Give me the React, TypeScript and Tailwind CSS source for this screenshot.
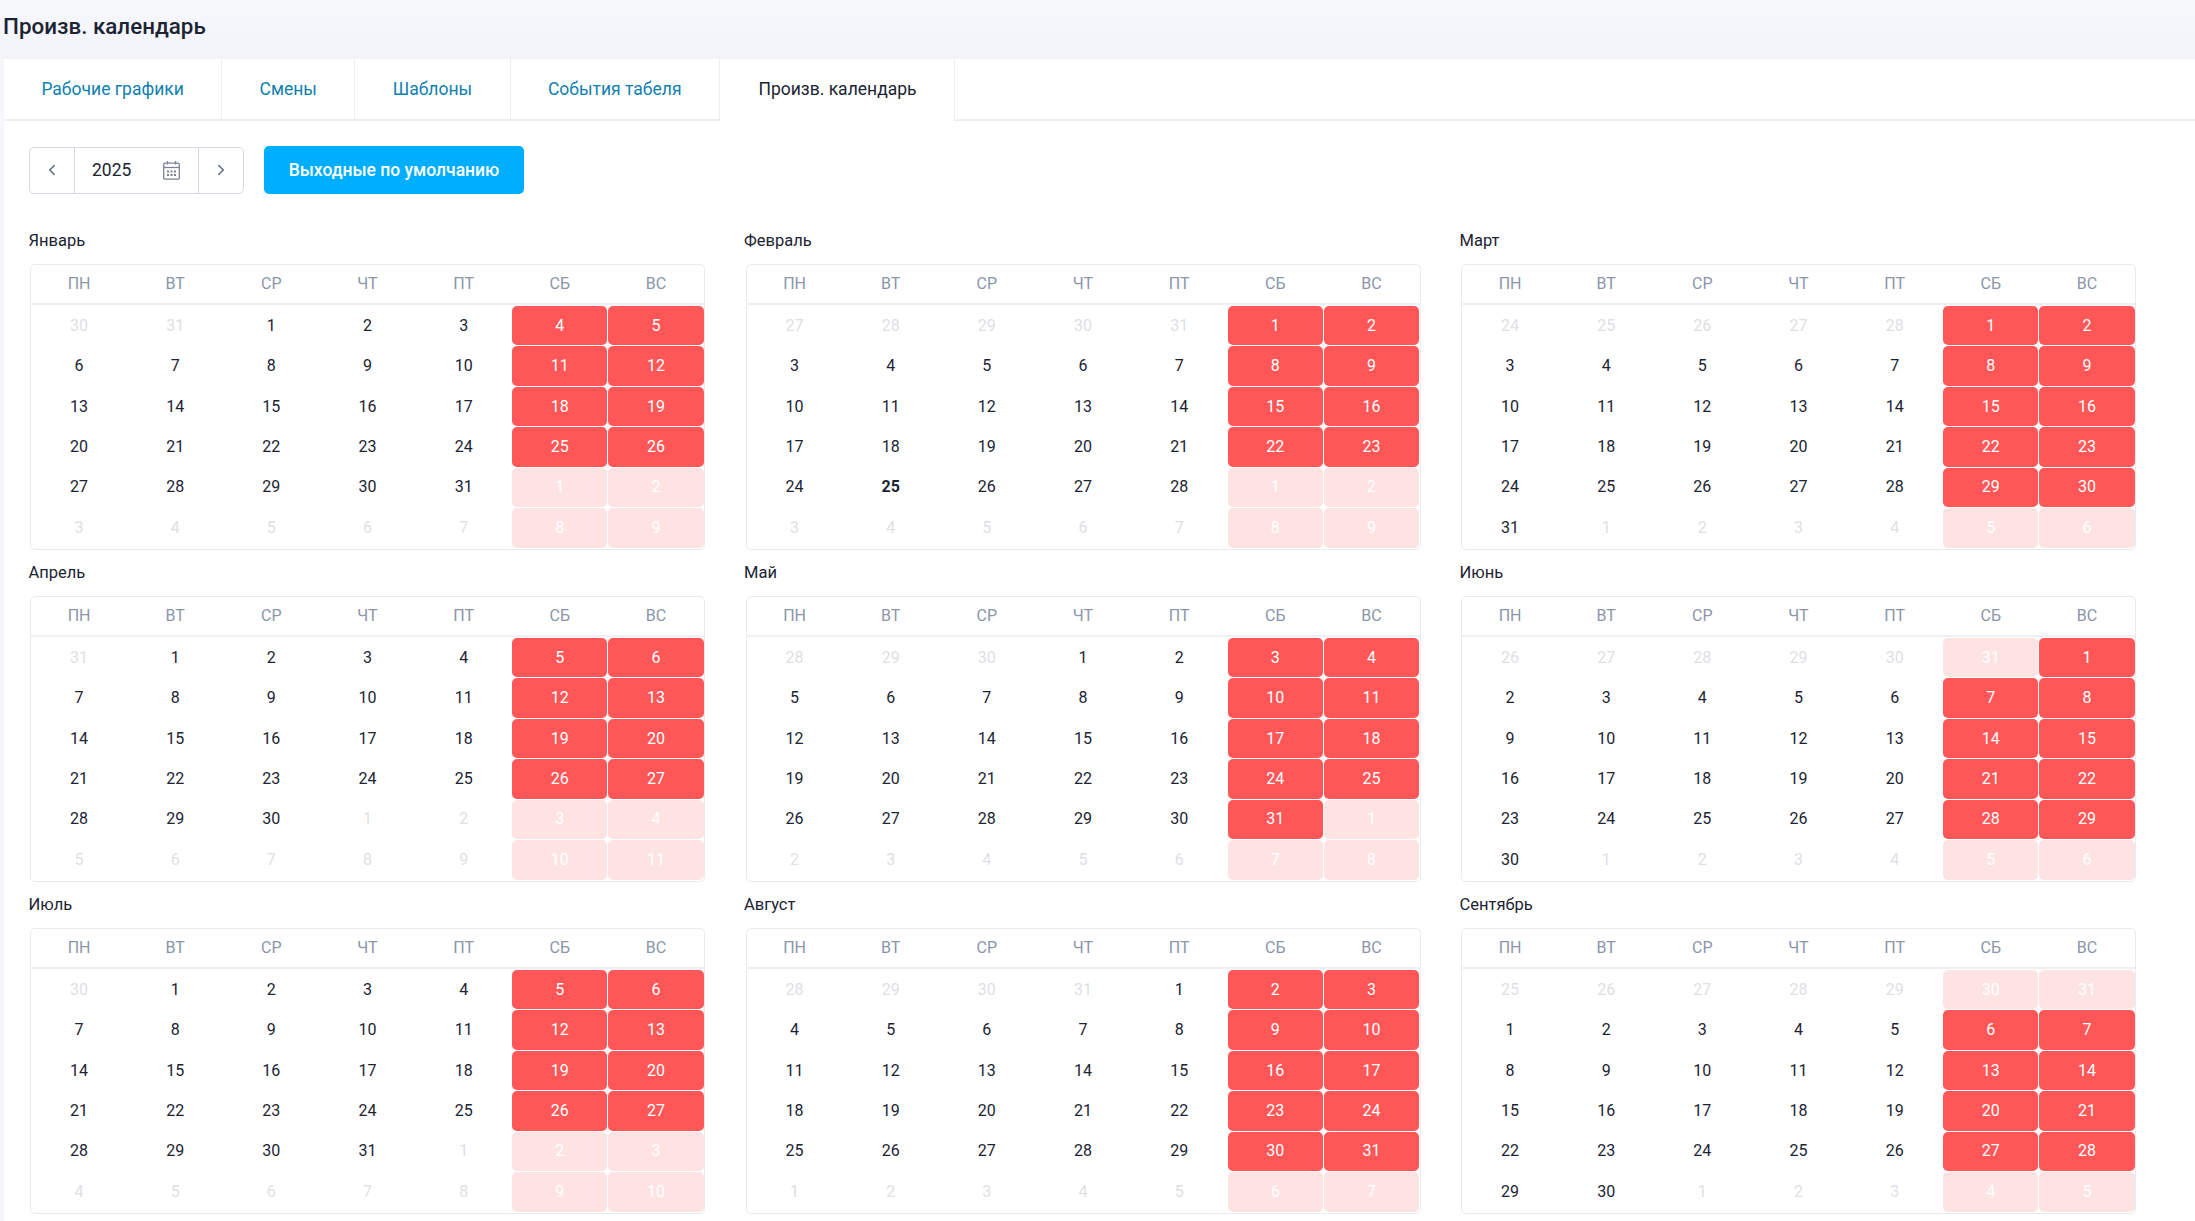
import { ChevronLeft, ChevronRight } from "lucide-react";

const MONTHS = ["Январь", "Февраль", "Март", "Апрель", "Май", "Июнь", "Июль", "Август", "Сентябрь"];
const WEEKDAYS = ["ПН", "ВТ", "СР", "ЧТ", "ПТ", "СБ", "ВС"];
const TABS = ["Рабочие графики", "Смены", "Шаблоны", "События табеля"];

function getDays(month: number) {
    const first = new Date(2025, month, 1);
    // a month that starts on monday still shows a full week before it
    const offset = (first.getDay() + 6) % 7 || 7;
    return Array.from({ length: 42 }, (_, i) => new Date(2025, month, 1 - offset + i));
}

function DayCell({ date, month, index }: { date: Date; month: number; index: number }) {
    const inMonth = date.getMonth() === month;
    const weekend = index % 7 >= 5;
    const today = month === 1 && inMonth && date.getDate() === 25;

    let cls = inMonth ? "text-[#1c2333]" : "text-[#dfe0e3]";
    if (weekend) cls = inMonth ? "bg-[#ff5757] text-white rounded-[5px]" : "bg-[#fee3e3] text-white rounded-[5px]";

    return (
        <div className={`m-[0.5px] flex items-center justify-center ${today ? "font-bold" : ""} ${cls}`}>
            {date.getDate()}
        </div>
    );
}

function MonthCard({ name, month }: { name: string; month: number }) {
    return (
        <div className="h-[332px]">
            <div className="h-[35px] -ml-[0.5px] pt-[1px] text-[16.5px] leading-[22px] text-[#1c2333]">{name}</div>
            <div className="ml-[1px] w-[675px] h-[286px] border border-[#e9ebf0] rounded-[5px] text-[16px]">
                <div className="grid grid-cols-7 h-[40px] items-center border-b-2 border-[#eff0f4] text-[#8b95a9]">
                    {WEEKDAYS.map((d) => (
                        <div key={d} className="text-center">{d}</div>
                    ))}
                </div>
                <div className="grid grid-cols-7 grid-rows-6 h-[243px] pt-[0.5px]">
                    {getDays(month).map((date, i) => (
                        <DayCell key={i} date={date} month={month} index={i} />
                    ))}
                </div>
            </div>
        </div>
    );
}

function CalendarIcon() {
    return (
        <svg width="17" height="19" viewBox="0 0 17 19" fill="none" className="text-[#7b8494]">
            <path d="M4.5 0v3.5M12.5 0v3.5" stroke="currentColor" strokeWidth="1.3" />
            <rect x="0.7" y="2.2" width="15.6" height="16" rx="1.2" stroke="currentColor" strokeWidth="1.3" />
            <path d="M0.7 6.5h15.6" stroke="currentColor" strokeWidth="1.3" />
            <path d="M4 9.5h2v2H4zM7.5 9.5h2v2h-2zM11 9.5h2v2h-2zM4 13h2v2H4zM7.5 13h2v2h-2zM11 13h2v2h-2z" fill="currentColor" />
        </svg>
    );
}

export default function App() {
    return (
        <div className="w-[2195px] h-[1221px] overflow-hidden bg-[#f5f7fb] font-['Roboto',sans-serif]">
            <div className="h-[59px] flex items-center pl-[3px] pb-[5px] bg-gradient-to-b from-[#f6f8fc] to-[#f2f4f9] text-[22.4px] font-medium text-[#1c2333]">
                Произв. календарь
            </div>
            <div className="ml-[4px] h-[1162px] bg-white">
                <div className="flex h-[62px] text-[17.5px]">
                    {TABS.map((t) => (
                        <div key={t} className="flex items-center px-[37.4px] border-r border-b-2 border-[#eceef2] text-[#0f7fb0]">
                            {t}
                        </div>
                    ))}
                    <div className="flex items-center pl-[38.5px] pr-[37.5px] pb-[1px] border-r border-[#eceef2] text-[#1c2333]">
                        Произв. календарь
                    </div>
                    <div className="flex-1 border-b-2 border-[#eceef2]" />
                </div>

                <div className="pl-[25px] pt-[25px]">
                    <div className="flex items-center h-[48px]">
                        <div className="flex w-[215px] h-[47px] border border-[#d4d9e9] rounded-[5px] text-[#5d6b85]">
                            <div className="w-[44px] flex items-center justify-center">
                                <ChevronLeft size={18} />
                            </div>
                            <div className="w-[125px] -my-[1px] flex items-center justify-between pl-[17px] pr-[18px] border border-[#d4d9e9] text-[17.5px] text-[#1c2333]">
                                2025
                                <CalendarIcon />
                            </div>
                            <div className="flex-1 flex items-center justify-center">
                                <ChevronRight size={18} />
                            </div>
                        </div>
                        <div className="ml-[20px] w-[260px] h-[48px] flex items-center justify-center rounded-[5px] bg-[#00aeff] text-[17.5px] font-medium text-white">
                            Выходные по умолчанию
                        </div>
                    </div>

                    <div className="mt-[35px] grid grid-cols-[repeat(3,715.5px)]">
                        {MONTHS.map((m, i) => (
                            <MonthCard key={m} name={m} month={i} />
                        ))}
                    </div>
                </div>
            </div>
        </div>
    );
}
